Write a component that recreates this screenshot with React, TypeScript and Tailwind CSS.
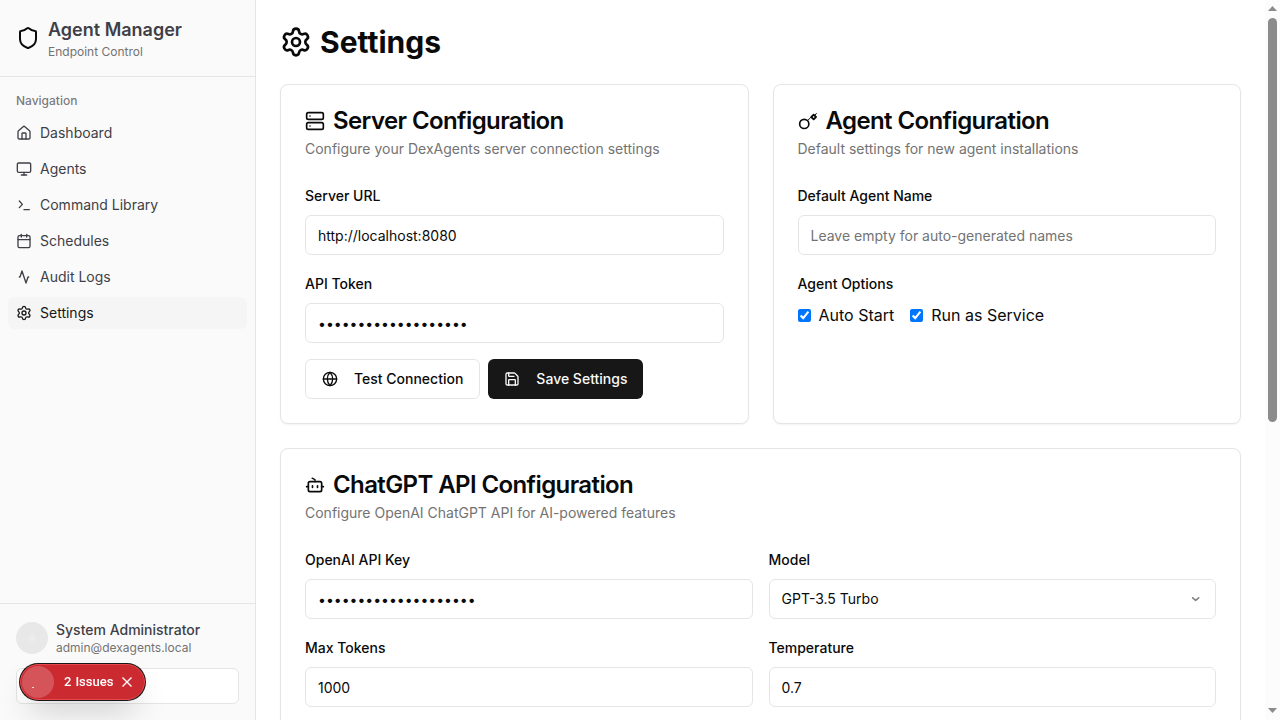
import { useState, type ComponentType, type InputHTMLAttributes, type ReactNode } from "react";
import { Calendar, Globe, House, Monitor, Save, Server, Settings, Shield } from "lucide-react";

type IconProps = { className?: string };
type IconType = ComponentType<IconProps>;

function LineIcon({ className, children }: IconProps & { children: ReactNode }) {
  return (
    <svg
      viewBox="0 0 24 24"
      className={className}
      fill="none"
      stroke="currentColor"
      strokeWidth="2"
      strokeLinecap="round"
      strokeLinejoin="round"
      aria-hidden="true"
    >
      {children}
    </svg>
  );
}

function TerminalIcon({ className }: IconProps) {
  return (
    <LineIcon className={className}>
      <path d="m5 16 4.5-5L5 6" />
      <path d="M12 19h8" />
    </LineIcon>
  );
}

function ActivityIcon({ className }: IconProps) {
  return (
    <LineIcon className={className}>
      <path d="M19 12h-1l-3 9L9 3l-3 9H5" />
    </LineIcon>
  );
}

function KeyIcon({ className }: IconProps) {
  return (
    <LineIcon className={className}>
      <circle cx="7.5" cy="15.5" r="5.5" />
      <path d="m12 11 3.5-3.5M20.5 5 22 3" strokeWidth="1.2" />
      <path d="m16 7.2 2.8 2.8 2.8-2.8-2.8-2.8z" strokeWidth="2.2" />
    </LineIcon>
  );
}

function BotIcon({ className }: IconProps) {
  return (
    <LineIcon className={className}>
      <path d="M8.5 3.8 12 5.5V8" strokeWidth="1.6" />
      <rect width="16" height="12" x="4" y="8" rx="2" />
      <path d="M2 14h2M20 14h2M15 13v2M9 13v2" />
    </LineIcon>
  );
}

function ChevronIcon({ className }: IconProps) {
  return (
    <LineIcon className={className}>
      <path d="m7 10.2 4.5 3.8 4.5-3.8" strokeWidth="2.4" />
    </LineIcon>
  );
}

const NAV_ITEMS: { label: string; icon: IconType; active?: boolean }[] = [
  { label: "Dashboard", icon: House },
  { label: "Agents", icon: Monitor },
  { label: "Command Library", icon: TerminalIcon },
  { label: "Schedules", icon: Calendar },
  { label: "Audit Logs", icon: ActivityIcon },
  { label: "Settings", icon: Settings, active: true },
];

function Sidebar() {
  return (
    <aside className="flex h-screen w-64 shrink-0 flex-col border-r border-neutral-200 bg-neutral-50 text-zinc-700">
      <header className="flex items-center gap-2 border-b border-neutral-200 p-4">
        <Shield className="size-6 text-neutral-950" />
        <div>
          <h2 className="text-lg/7 font-semibold">Agent Manager</h2>
          <p className="text-xs text-neutral-500">Endpoint Control</p>
        </div>
      </header>
      <nav aria-label="Navigation" className="flex-1 p-2">
        <div className="flex h-8 items-center px-2 text-xs font-medium text-zinc-700/70">Navigation</div>
        <ul className="flex flex-col gap-1">
          {NAV_ITEMS.map(({ label, icon: Icon, active }) => (
            <li key={label}>
              <a
                href="#"
                aria-current={active ? "page" : undefined}
                className={
                  active
                    ? "flex h-8 items-center gap-2 rounded-md bg-neutral-100 px-2 text-sm text-neutral-900"
                    : "flex h-8 items-center gap-2 rounded-md px-2 text-sm hover:bg-neutral-100"
                }
              >
                <Icon className="size-4" />
                {label}
              </a>
            </li>
          ))}
        </ul>
      </nav>
      <footer className="border-t border-neutral-200 p-4">
        <div className="mb-3 flex items-center gap-2">
          <div className="size-8 rounded-full bg-[radial-gradient(circle,#efefef_0px,#e8e8e8_5px)]" />
          <div>
            <p className="text-sm font-medium">System Administrator</p>
            <p className="text-xs text-neutral-500">admin@dexagents.local</p>
          </div>
        </div>
        <button
          type="button"
          aria-label="Log out"
          className="block h-9 w-full rounded-md border border-neutral-200 bg-white"
        />
      </footer>
    </aside>
  );
}

function IssuesPill() {
  const [open, setOpen] = useState(true);
  if (!open) return null;
  return (
    <div className="fixed bottom-5 left-5 flex h-9 items-center rounded-full border border-[#e5484d] bg-[#ca2a30] pr-2 pl-px font-[Roboto,sans-serif] text-[13px] font-medium text-white shadow-[0_0_0_1px_#171717,0_16px_32px_-8px_rgba(0,0,0,0.24)]">
      <span className="flex size-8 items-center justify-center rounded-full bg-white/20">
        <svg viewBox="0 0 32 32" className="size-8" aria-hidden="true">
          <rect x="10" y="21" width="2" height="1" fill="#fff" fillOpacity="0.8" />
        </svg>
      </span>
      <button type="button" className="ml-2.5 flex gap-1">
        <span>2</span>
        <span>Issues</span>
      </button>
      <button type="button" aria-label="Close" onClick={() => setOpen(false)} className="ml-[5px] p-0.5">
        <svg viewBox="0 0 14 14" className="size-3.5" fill="none" stroke="#fff" strokeWidth="1.4" aria-hidden="true">
          <path d="M2.5 2.5l9 9M11.5 2.5l-9 9" />
        </svg>
      </button>
    </div>
  );
}

type CardProps = { icon: IconType; title: string; description: string; children: ReactNode };

function Card({ icon: Icon, title, description, children }: CardProps) {
  return (
    <section className="rounded-lg border border-neutral-200 bg-white shadow-xs">
      <div className="flex flex-col gap-1.5 p-6">
        <h3 className="flex items-center gap-2 text-2xl/6 font-semibold tracking-tight">
          <Icon className="size-5" />
          {title}
        </h3>
        <p className="text-sm text-neutral-500">{description}</p>
      </div>
      <div className="px-6 pb-6">{children}</div>
    </section>
  );
}

type FieldProps = InputHTMLAttributes<HTMLInputElement> & { id: string; label: string };

function Field({ id, label, ...props }: FieldProps) {
  return (
    <div className="flex flex-col gap-2">
      <div>
        <label htmlFor={id} className="text-sm font-medium">
          {label}
        </label>
      </div>
      <input
        id={id}
        className="h-10 w-full rounded-md border border-neutral-200 bg-white px-3 text-sm placeholder:text-neutral-500"
        {...props}
      />
    </div>
  );
}

function ScrollRail() {
  return (
    <div aria-hidden="true" className="flex w-[15px] shrink-0 flex-col items-center bg-[#fcfcfc]">
      <svg viewBox="0 0 9 18" className="h-[18px] w-[9px] shrink-0" fill="#8b8b8b">
        <path d="M0 11 4.5 6 9 11z" />
      </svg>
      <div className="w-[9px] flex-1">
        <div className="h-[59%] rounded-full bg-[#8b8b8b]" />
      </div>
      <svg viewBox="0 0 9 18" className="h-[18px] w-[9px] shrink-0" fill="#8b8b8b">
        <path d="M0 6 4.5 11 9 6z" />
      </svg>
    </div>
  );
}

export default function App() {
  return (
    <div className="flex h-screen bg-white font-['Inter',sans-serif] text-neutral-950">
      <Sidebar />
      <main className="min-w-0 flex-1 overflow-y-auto [scrollbar-width:none]">
        <div className="flex flex-col gap-6 p-6 pb-96">
          <h1 className="flex items-center gap-2 text-3xl/9 font-bold">
            <Settings className="size-8" />
            Settings
          </h1>

          <div className="grid grid-cols-2 gap-6">
            <Card
              icon={Server}
              title="Server Configuration"
              description="Configure your DexAgents server connection settings"
            >
              <form className="flex flex-col gap-4">
                <Field id="server-url" label="Server URL" type="text" defaultValue="http://localhost:8080" />
                <Field id="api-token" label="API Token" type="password" defaultValue="your-secret-token-1" />
                <div className="flex gap-2">
                  <button
                    type="button"
                    className="flex h-10 items-center gap-4 rounded-md border border-neutral-200 bg-white px-4 text-sm font-medium"
                  >
                    <Globe className="size-4" />
                    Test Connection
                  </button>
                  <button
                    type="button"
                    className="flex h-10 items-center gap-4 rounded-md bg-neutral-900 px-4 text-sm font-medium text-neutral-50"
                  >
                    <Save className="size-4" />
                    Save Settings
                  </button>
                </div>
              </form>
            </Card>

            <Card icon={KeyIcon} title="Agent Configuration" description="Default settings for new agent installations">
              <form className="flex flex-col gap-4">
                <Field
                  id="agent-name"
                  label="Default Agent Name"
                  type="text"
                  placeholder="Leave empty for auto-generated names"
                />
                <fieldset>
                  <legend className="mb-2">
                    <span className="text-sm font-medium">Agent Options</span>
                  </legend>
                  <div className="flex gap-4">
                    <label className="flex items-center gap-2">
                      <input type="checkbox" defaultChecked />
                      Auto Start
                    </label>
                    <label className="flex items-center gap-2">
                      <input type="checkbox" defaultChecked />
                      Run as Service
                    </label>
                  </div>
                </fieldset>
              </form>
            </Card>
          </div>

          <Card
            icon={BotIcon}
            title="ChatGPT API Configuration"
            description="Configure OpenAI ChatGPT API for AI-powered features"
          >
            <form className="grid grid-cols-2 gap-4">
              <Field id="openai-key" label="OpenAI API Key" type="password" defaultValue="sk-0000000000000000x" />
              <div className="flex flex-col gap-2">
                <div>
                  <label htmlFor="model" className="text-sm font-medium">
                    Model
                  </label>
                </div>
                <div className="relative">
                  <select
                    id="model"
                    className="h-10 w-full appearance-none rounded-md border border-neutral-200 bg-white px-3 text-sm"
                  >
                    <option>GPT-3.5 Turbo</option>
                    <option>GPT-4</option>
                  </select>
                  <ChevronIcon className="pointer-events-none absolute top-3 right-3 size-4 opacity-50" />
                </div>
              </div>
              <Field id="max-tokens" label="Max Tokens" type="text" defaultValue="1000" />
              <Field id="temperature" label="Temperature" type="text" defaultValue="0.7" />
            </form>
          </Card>
        </div>
      </main>
      <ScrollRail />
      <IssuesPill />
    </div>
  );
}
